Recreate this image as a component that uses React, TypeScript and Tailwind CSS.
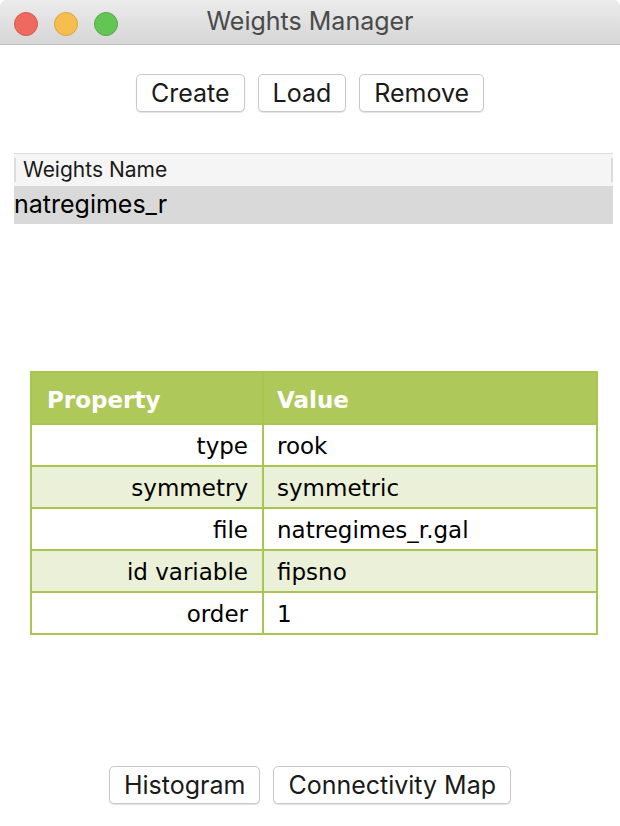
import React from 'react';

const rows = [
  { prop: 'type', value: 'rook' },
  { prop: 'symmetry', value: 'symmetric' },
  { prop: 'file', value: 'natregimes_r.gal' },
  { prop: 'id variable', value: 'fipsno' },
  { prop: 'order', value: '1' },
];

const sysFont = { fontFamily: 'Inter, "Liberation Sans", sans-serif' };
const tableFont = { fontFamily: '"DejaVu Sans", Verdana, sans-serif' };

function MacButton({ children }: { children: React.ReactNode }) {
  return (
    <button className="h-[38px] px-[14px] bg-white border border-[#c9c9c9] rounded-[5px] shadow-[0_1px_1px_rgba(0,0,0,0.12)] text-[25px] text-[#1a1a1a] leading-none">
      {children}
    </button>
  );
}

export default function App() {
  return (
    <div className="w-[620px] h-[826px] bg-white flex flex-col" style={sysFont}>
      {/* Title bar */}
      <div className="h-[45px] shrink-0 relative flex items-center justify-center bg-gradient-to-b from-[#ececec] to-[#d6d6d6] border-b border-[#bdbdbd] rounded-t-[6px]">
        <div className="absolute left-[14px] top-[12px] flex gap-[16px]">
          <span className="w-[24px] h-[24px] rounded-full bg-[#ee6a5f] border border-[#d8574c]" />
          <span className="w-[24px] h-[24px] rounded-full bg-[#f5be4f] border border-[#dba53c]" />
          <span className="w-[24px] h-[24px] rounded-full bg-[#62c554] border border-[#50ad42]" />
        </div>
        <span className="text-[25px] text-[#4a4a4a]">Weights Manager</span>
      </div>

      {/* Top buttons */}
      <div className="flex justify-center gap-[13px] mt-[29px]">
        <MacButton>Create</MacButton>
        <MacButton>Load</MacButton>
        <MacButton>Remove</MacButton>
      </div>

      {/* Weights list */}
      <div className="mt-[41px] mx-[14px] w-[599px]">
        <div className="h-[33px] bg-[#f5f5f5] border-t border-[#dcdcdc] flex items-center text-[21px] text-[#1a1a1a]">
          <span className="w-[2px] h-[24px] bg-[#dcdcdc]" />
          <span className="pl-[7px] flex-1">Weights Name</span>
          <span className="w-[2px] h-[24px] bg-[#dcdcdc]" />
        </div>
        <div className="h-[38px] bg-[#d9d9d9] flex items-center text-[25px] text-black">
          natregimes_r
        </div>
      </div>

      {/* Property table */}
      <div className="mt-[147px] mx-[30px] w-[568px]" style={tableFont}>
        <table className="w-full border-collapse border-2 border-[#a8c64e]">
          <thead>
            <tr className="h-[52px] bg-[#afc85a]">
              <th className="w-[232px] text-left pl-[15px] pt-[4px] text-white text-[23px] font-bold border-2 border-[#a8c64e]">
                Property
              </th>
              <th className="text-left pl-[13px] pt-[4px] text-white text-[23px] font-bold border-2 border-[#a8c64e]">
                Value
              </th>
            </tr>
          </thead>
          <tbody>
            {rows.map((r, i) => (
              <tr key={r.prop} className={`h-[42px] ${i % 2 === 1 ? 'bg-[#ebf0d8]' : 'bg-white'}`}>
                <td className="text-right pr-[14px] pt-[3px] text-[23px] text-black border-2 border-[#a8c64e]">
                  {r.prop}
                </td>
                <td className="text-left pl-[13px] pt-[3px] text-[23px] text-black border-2 border-[#a8c64e]">
                  {r.value}
                </td>
              </tr>
            ))}
          </tbody>
        </table>
      </div>

      {/* Bottom buttons */}
      <div className="flex justify-center gap-[13px] mt-auto mb-[22px]">
        <MacButton>Histogram</MacButton>
        <MacButton>Connectivity Map</MacButton>
      </div>
    </div>
  );
}
